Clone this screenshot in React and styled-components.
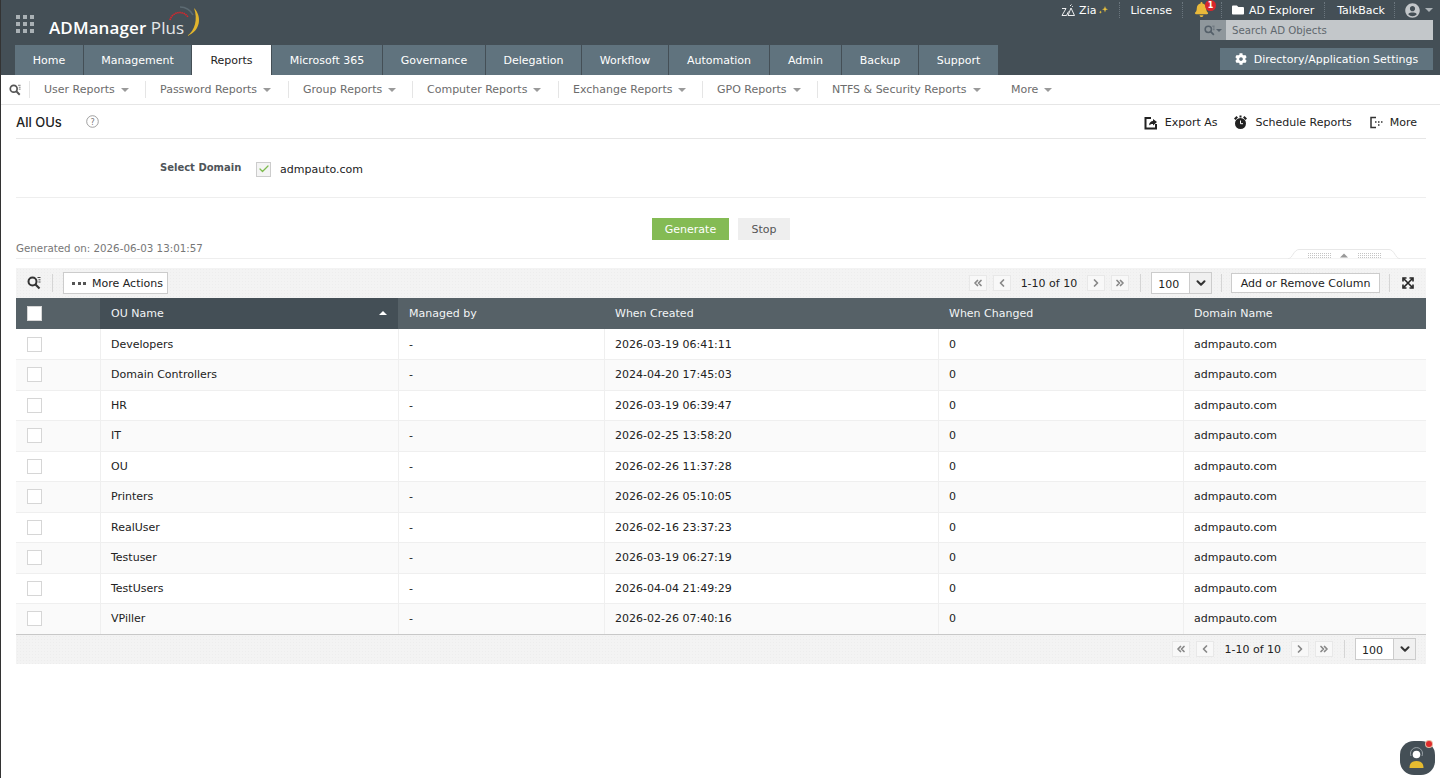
import React from 'react';
import styled, { createGlobalStyle } from 'styled-components';
import { FaBell, FaFolder, FaCog, FaUserCircle } from 'react-icons/fa';
import { FiCheck, FiChevronDown, FiChevronLeft, FiChevronRight, FiChevronsLeft, FiChevronsRight } from 'react-icons/fi';

const GlobalStyle = createGlobalStyle`
  html, body { margin: 0; padding: 0; background: #fff; }
  body {
    font-family: "DejaVu Sans", Verdana, sans-serif;
    font-size: 11px;
    color: #222;
    height: 778px;
    overflow: hidden;
  }
`;

const tabs = ['Home', 'Management', 'Reports', 'Microsoft 365', 'Governance', 'Delegation', 'Workflow', 'Automation', 'Admin', 'Backup', 'Support'];
const tabWidths = [68, 107, 79, 110, 102, 95, 86, 100, 71, 76, 79];
const subMenu = [
  ['User Reports', 116],
  ['Password Reports', 143],
  ['Group Reports', 124],
  ['Computer Reports', 146],
  ['Exchange Reports', 144],
  ['GPO Reports', 115],
  ['NTFS & Security Reports', 180],
  ['More', 60],
];
const rows = [
  ['Developers', '2026-03-19 06:41:11'],
  ['Domain Controllers', '2024-04-20 17:45:03'],
  ['HR', '2026-03-19 06:39:47'],
  ['IT', '2026-02-25 13:58:20'],
  ['OU', '2026-02-26 11:37:28'],
  ['Printers', '2026-02-26 05:10:05'],
  ['RealUser', '2026-02-16 23:37:23'],
  ['Testuser', '2026-03-19 06:27:19'],
  ['TestUsers', '2026-04-04 21:49:29'],
  ['VPiller', '2026-02-26 07:40:16'],
];

const Page = styled.div`
  border-left: 1px solid #333;
  height: 778px;
  box-sizing: border-box;
  position: relative;
`;

const Header = styled.header`
  height: 75px;
  background: #444f56;
  display: flex;
  justify-content: space-between;
`;

const HeaderLeft = styled.div`
  display: flex;
  flex-direction: column;
  justify-content: space-between;
  padding-left: 14px;
`;

const Brand = styled.div`
  display: flex;
  align-items: center;
  height: 45px;
`;

const AppGrid = styled.div`
  display: grid;
  grid-template-columns: repeat(3, 4px);
  gap: 3px;
  margin: 3px 15px 0 1px;
  span { background: #aab1b5; height: 4px; }
`;

const LogoText = styled.div`
  font-family: "Open Sans", sans-serif;
  font-size: 17px;
  color: #fff;
  font-weight: 600;
  position: relative;
  padding-top: 9px;
  letter-spacing: 0.1px;
  b { font-weight: 400; color: #e4e7e9; }
`;

const LogoArc = styled.svg`
  position: absolute;
  left: 119px;
  top: -5px;
`;

const Tabs = styled.nav`
  display: flex;
  height: 30px;
`;

const Tab = styled.div`
  width: ${p => p.$w}px;
  margin-right: 1px;
  padding-top: 1px;
  background: ${p => (p.$active ? '#fff' : '#60737e')};
  color: ${p => (p.$active ? '#222' : '#fff')};
  display: flex;
  align-items: center;
  justify-content: center;
  font-size: 11px;
  box-sizing: border-box;
`;

const HeaderRight = styled.div`
  width: 234px;
  padding-right: 7px;
  display: flex;
  flex-direction: column;
  align-items: flex-end;
`;

const TopLinks = styled.div`
  display: flex;
  align-items: center;
  height: 20px;
  color: #fff;
  white-space: nowrap;
`;

const TopLink = styled.span`
  display: inline-flex;
  align-items: center;
  gap: ${p => p.$gap || 5}px;
  padding: 0 ${p => p.$right ?? 10}px 0 ${p => p.$left ?? 10}px;
  height: 16px;
  border-right: ${p => (p.$last ? 'none' : '1px dotted #6b767e')};
  position: relative;
`;

const Bell = styled(FaBell)`
  margin: -2px 2px 0 0;
`;

const BellBadge = styled.i`
  position: absolute;
  left: 22px;
  top: -2px;
  width: 11px;
  height: 11px;
  border-radius: 50%;
  background: #d9262c;
  color: #fff;
  font: bold 8px/11px "DejaVu Sans", sans-serif;
  text-align: center;
`;

const SearchBox = styled.div`
  width: 233px;
  height: 20px;
  display: flex;
  background: #c3c7ca;
  color: #5f686e;
  font-size: 10.2px;
  align-items: center;
`;

const SearchIcon = styled.div`
  width: 26px;
  height: 20px;
  background: #8f979c;
  display: flex;
  align-items: center;
  justify-content: center;
  gap: 1px;
  margin-right: 6px;
`;

const SettingsButton = styled.div`
  width: 213px;
  height: 22px;
  margin-top: 8px;
  background: #60737e;
  color: #fff;
  display: flex;
  align-items: center;
  justify-content: center;
  gap: 7px;
  font-size: 11px;
`;

const SubMenu = styled.div`
  height: 30px;
  padding-left: 8px;
  border-bottom: 1px solid #e6e6e6;
  box-sizing: border-box;
  display: flex;
  align-items: center;
`;

const SubSearch = styled.div`
  width: 20px;
  display: flex;
`;

const SubItem = styled.div`
  width: ${p => p.$w}px;
  box-sizing: border-box;
  color: #6c6c6c;
  height: 17px;
  display: flex;
  align-items: center;
  padding-left: 14px;
  gap: 6px;
  border-left: ${p => (p.$last ? 'none' : '1px solid #e5e5e5')};
  white-space: nowrap;
`;

const Caret = styled.i`
  width: 0;
  height: 0;
  border-left: ${p => p.$s || 4}px solid transparent;
  border-right: ${p => p.$s || 4}px solid transparent;
  border-top: ${p => p.$s || 4}px solid ${p => p.$c || '#9a9a9a'};
  display: inline-block;
`;

const Content = styled.main`
  margin: 0 14px 0 15px;
`;

const TitleRow = styled.div`
  height: 34px;
  box-sizing: border-box;
  border-bottom: 1px solid #e6e6e6;
  display: flex;
  align-items: center;
  justify-content: space-between;
`;

const Title = styled.div`
  display: flex;
  align-items: center;
  gap: 24px;
  font-size: 13px;
  font-family: "Inter", sans-serif;
  font-weight: 500;
  color: #222;
`;

const TitleActions = styled.div`
  display: flex;
  gap: 16px;
  padding: 2px 9px 0 0;
`;

const TitleAction = styled.span`
  display: inline-flex;
  align-items: center;
  gap: 7px;
  &:last-child { margin-left: 2px; }
`;

const DomainRow = styled.div`
  height: 59px;
  box-sizing: border-box;
  border-bottom: 1px solid #eee;
  display: flex;
  align-items: center;
  padding: 2px 0 0 144px;
`;

const DomainLabel = styled.label`
  font-weight: bold;
  font-size: 10px;
  color: #4f5559;
  width: 96px;
  margin-top: -3px;
`;

const CheckBox = styled.span`
  width: 13px;
  height: 13px;
  border: 1px solid ${p => (p.$fill ? '#ccc' : '#d6d6d6')};
  background: ${p => (p.$fill ? '#f4f4f4' : '#fff')};
  display: ${p => (p.$block ? 'block' : 'inline-flex')};
  align-items: center;
  justify-content: center;
  margin-right: 9px;
`;

const ButtonRow = styled.div`
  height: 61px;
  position: relative;
  display: flex;
  justify-content: center;
  gap: 9px;
  padding-top: 20px;
  box-sizing: border-box;
  border-bottom: 1px solid #eee;
`;

const Btn = styled.button`
  height: 22px;
  padding: 0;
  width: ${p => (p.$primary ? 77 : 52)}px;
  border: none;
  background: ${p => (p.$primary ? '#84bb54' : '#eeeeee')};
  color: ${p => (p.$primary ? '#fff' : '#555')};
  font: 11px "DejaVu Sans", sans-serif;
`;

const Generated = styled.div`
  position: absolute;
  left: 0;
  bottom: 4px;
  font-size: 10.3px;
  color: #777;
`;

const Collapse = styled.svg`
  position: absolute;
  right: 26px;
  bottom: -1px;
`;

const dotted = `
  background-color: #f3f3f3;
  background-image: radial-gradient(#ededed 0.6px, transparent 0.7px);
  background-size: 3px 3px;
`;

const Toolbar = styled.div`
  margin-top: 9px;
  height: 30px;
  ${dotted}
  display: flex;
  align-items: center;
  justify-content: space-between;
  padding: 0 12px 0 11px;
`;

const ToolGroup = styled.div`
  display: flex;
  align-items: center;
`;

const Sep = styled.span`
  width: 1px;
  height: 18px;
  background: #d5d5d5;
  margin: 0 ${p => p.$l ?? 10}px 0 ${p => p.$m ?? 10}px;
`;

const OutlineBtn = styled.span`
  height: ${p => p.$h || 22}px;
  background: #fff;
  border: 1px solid #ccc;
  display: inline-flex;
  align-items: center;
  padding: 0 ${p => p.$pad || 4}px 0 ${p => p.$pad || 8}px;
  gap: 6px;
  box-sizing: border-box;
  white-space: nowrap;
`;

const Dots = styled.i`
  display: inline-flex;
  gap: 2.5px;
  b { width: 3px; height: 3px; background: #555; display: block; }
`;

const PageBtn = styled.span`
  width: 18px;
  height: 16px;
  box-sizing: border-box;
  background: #f8f8f8;
  border: 1px solid #e8e8e8;
  display: inline-flex;
  align-items: center;
  justify-content: center;
  color: #888;
  margin-right: ${p => (p.$last ? 0 : 6)}px;
`;

const PageText = styled.span`
  margin: 0 10px 0 4px;
`;

const PageSize = styled.div`
  width: 61px;
  height: 22px;
  background: #fff;
  border: 1px solid #ccc;
  box-sizing: border-box;
  display: flex;
  align-items: stretch;
  font-size: 11px;
  span { flex: 1; padding: 5px 0 0 6px; }
  em {
    width: 21px;
    background: #f0f0f0;
    border-left: 1px solid #ccc;
    display: flex;
    align-items: center;
    justify-content: center;
    font-style: normal;
    color: #333;
  }
`;

const Table = styled.table`
  width: 100%;
  border-collapse: collapse;
  table-layout: fixed;
`;

const Th = styled.th`
  height: 31px;
  padding: 0 0 0 11px;
  background: ${p => (p.$sorted ? '#444f56' : '#566167')};
  color: #f2f4f5;
  font-weight: normal;
  text-align: left;
  position: relative;
`;

const SortUp = styled.i`
  position: absolute;
  right: 11px;
  top: 13px;
  border-left: 4px solid transparent;
  border-right: 4px solid transparent;
  border-bottom: 4px solid #fff;
`;

const Tr = styled.tr`
  background: ${p => (p.$alt ? '#fafafa' : '#fff')};
`;

const Td = styled.td`
  height: 30.5px;
  padding: 0 0 0 10.5px;
  box-sizing: border-box;
  border-right: 1px solid #efefef;
  border-bottom: 1px solid #efefef;
  &:first-child { padding-left: 11px; }
  &:last-child { border-right: none; }
`;

const TableFoot = styled.div`
  height: 30px;
  margin-top: -1px;
  position: relative;
  ${dotted}
  border-top: 1px solid #c8c8c8;
  box-sizing: border-box;
  display: flex;
  align-items: center;
  justify-content: flex-end;
  padding-right: 10px;
`;

const ChatWidget = styled.div`
  position: absolute;
  left: 1399px;
  top: 741px;
  width: 35px;
  height: 34px;
  border-radius: 14px;
  background: #444f56;
`;

const ChatDot = styled.i`
  position: absolute;
  left: 26px;
  top: 0;
  width: 6px;
  height: 6px;
  border-radius: 50%;
  background: #e02b2b;
  box-shadow: 0 0 0 1px #e7b9a0;
`;

function Search({ color = '#3c4449', size = 13 }) {
  return (
    <svg width={size} height={size} viewBox="0 0 14 14" fill="none">
      <circle cx="5.5" cy="5.5" r="4" stroke={color} strokeWidth="2" />
      <path d="M8.5 8.5L12.5 12.5" stroke={color} strokeWidth="2.2" />
      <path d="M10.5 1.5h3M11.5 3.8h2M11.5 6h2" stroke={color} strokeWidth="0.9" />
    </svg>
  );
}

function Pager() {
  return (
    <>
      <PageBtn><FiChevronsLeft size={12} strokeWidth={3.5} /></PageBtn>
      <PageBtn><FiChevronLeft size={12} strokeWidth={3.5} /></PageBtn>
      <PageText>1-10 of 10</PageText>
      <PageBtn><FiChevronRight size={12} strokeWidth={3.5} /></PageBtn>
      <PageBtn $last><FiChevronsRight size={12} strokeWidth={3.5} /></PageBtn>
      <Sep $m={11} $l={10} />
      <PageSize><span>100</span><em><FiChevronDown size={14} strokeWidth={3.5} /></em></PageSize>
    </>
  );
}

export default function App() {
  return (
    <Page>
      <GlobalStyle />
      <Header>
        <HeaderLeft>
          <Brand>
            <AppGrid>{Array.from({ length: 9 }).map((_, i) => <span key={i} />)}</AppGrid>
            <LogoText>
              ADManager <b>Plus</b>
              <LogoArc width="36" height="36" viewBox="0 0 36 36" fill="none">
                <path d="M2 18 A 10 10 0 0 1 20 15" stroke="#d9262c" strokeWidth="1.6" strokeDasharray="1.5 0.6" />
                <path d="M12 5 A 15 15 0 0 1 25 13" stroke="#5c6a72" strokeWidth="1.6" />
                <path d="M26 6 C 34 14, 33 29, 19 34 C 27 29, 30 17, 26 6 Z" fill="#e2b52d" />
              </LogoArc>
            </LogoText>
          </Brand>
          <Tabs>
            {tabs.map((t, i) => <Tab key={t} $w={tabWidths[i]} $active={t === 'Reports'}>{t}</Tab>)}
          </Tabs>
        </HeaderLeft>
        <HeaderRight>
          <TopLinks>
            <TopLink $gap={3}>
              <svg width="15" height="13" viewBox="0 0 15 13" fill="none" stroke="#fff" strokeWidth="0.9">
                <path d="M1 4.5h4L1 11.5h4.5M7 11.5L10 4l3.5 7.5zM7.5 7.5l-2 4M9 2l1.5-1.5M11 3l.8-.8" />
              </svg>
              Zia
              <svg width="10" height="10" viewBox="0 0 10 10" fill="#e9c13c"><path d="M6 1l.8 2.4L9 4.2l-2.2.8L6 7.4 5.2 5 3 4.2l2.2-.8zM1.500 5.500l.5 1.200 1.100.4-1.100.4-.5 1.200L1 7.500-.1 7.100 1 6.700z" /></svg>
            </TopLink>
            <TopLink>License</TopLink>
            <TopLink $left={11}>
              <Bell size={15} color="#e9b93a" />
              <BellBadge>1</BellBadge>
            </TopLink>
            <TopLink><FaFolder size={12} />AD Explorer</TopLink>
            <TopLink $left={12} $right={9}>TalkBack</TopLink>
            <TopLink $last $right={0}><FaUserCircle size={15} color="#c3c7ca" /><Caret $c="#aab1b5" /></TopLink>
          </TopLinks>
          <SearchBox>
            <SearchIcon><Search color="#55606a" size={11} /><Caret $c="#55606a" $s={3} /></SearchIcon>
            Search AD Objects
          </SearchBox>
          <SettingsButton><FaCog size={12} />Directory/Application Settings</SettingsButton>
        </HeaderRight>
      </Header>

      <SubMenu>
        <SubSearch><Search color="#555" size={12} /></SubSearch>
        {subMenu.map(([s, w], i) => (
          <SubItem key={s} $w={w} $last={i === subMenu.length - 1}>{s}<Caret /></SubItem>
        ))}
      </SubMenu>

      <Content>
        <TitleRow>
          <Title>
            All OUs
            <svg width="13" height="13" viewBox="0 0 13 13" fill="none">
              <circle cx="6.500" cy="6.500" r="5.800" stroke="#888" strokeWidth="0.8" />
              <text x="6.500" y="9.500" textAnchor="middle" fontSize="8" fill="#777" fontFamily="DejaVu Sans">?</text>
            </svg>
          </Title>
          <TitleActions>
            <TitleAction>
              <svg width="14" height="14" viewBox="0 0 14 14" fill="none">
                <path d="M7 2H1.500v10.500H12V8" stroke="#222" strokeWidth="2" />
                <path d="M5 9.500c0-3 2-4.500 4-4.500V3l4 3-4 3.500V8C7 8 6 8.500 5 9.500z" fill="#222" />
              </svg>
              Export As
            </TitleAction>
            <TitleAction>
              <svg width="15" height="15" viewBox="0 0 15 15" fill="#222">
                <circle cx="7.500" cy="8.500" r="5.500" />
                <path d="M1 3.500L3.500 1 5 2.500 2.500 5zM14 3.500L11.500 1 10 2.500 12.500 5zM6.500 .5h2v2h-2z" />
                <path d="M7.500 5.500v3.200h2.500" stroke="#fff" strokeWidth="1" fill="none" />
              </svg>
              Schedule Reports
            </TitleAction>
            <TitleAction>
              <svg width="13" height="13" viewBox="0 0 13 13" fill="none" stroke="#333" strokeWidth="1.500">
                <path d="M6 1.500H1v10h5" />
                <path d="M5 6h1.500M8 6h1.500M11 6h1.500M8 9h1.500" />
              </svg>
              More
            </TitleAction>
          </TitleActions>
        </TitleRow>

        <DomainRow>
          <DomainLabel>Select Domain</DomainLabel>
          <CheckBox $fill><FiCheck size={12} strokeWidth={2.5} color="#7dbb4e" /></CheckBox>
          admpauto.com
        </DomainRow>

        <ButtonRow>
          <Btn $primary>Generate</Btn>
          <Btn>Stop</Btn>
          <Generated>Generated on: 2026-06-03 13:01:57</Generated>
          <Collapse width="112" height="10" viewBox="0 0 112 10">
            <defs>
              <pattern id="grip" width="2" height="2" patternUnits="userSpaceOnUse">
                <rect width="1" height="1" fill="#c4c4c4" />
              </pattern>
            </defs>
            <path d="M0 9.500H1C4 9.500 6 .5 11 .5H101C106 .5 108 9.500 111 9.500H112V10H0Z" fill="#fff" stroke="#e8e8e8" />
            <rect x="19" y="4" width="24" height="5" fill="url(#grip)" />
            <rect x="69" y="4" width="24" height="5" fill="url(#grip)" />
            <path d="M52 8.500L56 4.500L60 8.500Z" fill="#999" />
          </Collapse>
        </ButtonRow>

        <Toolbar>
          <ToolGroup>
            <Search color="#333" size={14} />
            <Sep $m={11} />
            <OutlineBtn><Dots><b /><b /><b /></Dots>More Actions</OutlineBtn>
          </ToolGroup>
          <ToolGroup>
            <Pager />
            <Sep $m={9} $l={9} />
            <OutlineBtn $h={20} $pad={8.5}>Add or Remove Column</OutlineBtn>
            <Sep $m={9} $l={12} />
            <svg width="12" height="12" viewBox="0 0 12 12" fill="none" stroke="#222" strokeWidth="1.600">
              <path d="M1.500 1.500l9 9M10.500 1.500l-9 9" />
              <path d="M1 4.500V1h3.500M7.500 1H11v3.500M1 7.500V11h3.500M7.500 11H11V7.500" />
            </svg>
          </ToolGroup>
        </Toolbar>

        <Table>
          <colgroup>
            <col width="84" /><col width="298" /><col width="206" /><col width="334" /><col width="245" /><col width="243" />
          </colgroup>
          <thead>
            <tr>
              <Th><CheckBox $block /></Th>
              <Th $sorted>OU Name<SortUp /></Th>
              <Th>Managed by</Th>
              <Th>When Created</Th>
              <Th>When Changed</Th>
              <Th>Domain Name</Th>
            </tr>
          </thead>
          <tbody>
            {rows.map(([name, created], i) => (
              <Tr key={name} $alt={i % 2 === 1}>
                <Td><CheckBox $block /></Td>
                <Td>{name}</Td>
                <Td>-</Td>
                <Td>{created}</Td>
                <Td>0</Td>
                <Td>admpauto.com</Td>
              </Tr>
            ))}
          </tbody>
        </Table>

        <TableFoot><Pager /></TableFoot>
      </Content>

      <ChatWidget>
        <ChatDot />
        <svg width="35" height="34" viewBox="0 0 35 34" fill="none">
          <path d="M11 15a6 6 0 1 1 11 0" stroke="#aeb6bb" strokeWidth="0.8" />
          <circle cx="16.500" cy="13.500" r="3.800" fill="#fff" />
          <path d="M9.500 27c0-5 2.500-7 7-7s7 2 7 7z" fill="#e6bb2f" />
        </svg>
      </ChatWidget>
    </Page>
  );
}
